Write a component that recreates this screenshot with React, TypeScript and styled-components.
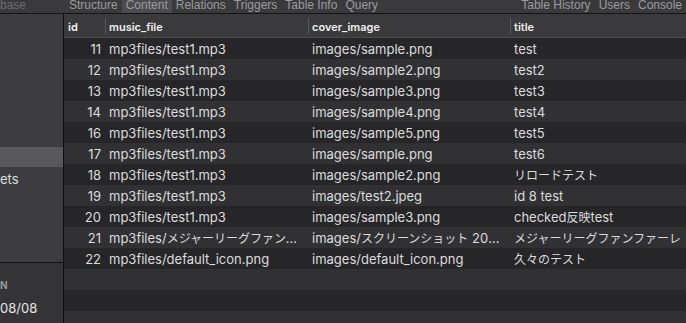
import React from "react"
import styled, { createGlobalStyle } from "styled-components"

const GlobalStyle = createGlobalStyle`
  html, body {
    margin: 0;
    padding: 0;
    background: #2a2a2c;
    overflow: hidden;
  }
  body {
    font-family: Inter, "Liberation Sans", "Noto Sans CJK JP", sans-serif;
    -webkit-font-smoothing: antialiased;
  }
`

type Row = { id: number; music: string; cover: string; title: string }

const rows: Row[] = [
  { id: 11, music: "mp3files/test1.mp3", cover: "images/sample.png", title: "test" },
  { id: 12, music: "mp3files/test1.mp3", cover: "images/sample2.png", title: "test2" },
  { id: 13, music: "mp3files/test1.mp3", cover: "images/sample3.png", title: "test3" },
  { id: 14, music: "mp3files/test1.mp3", cover: "images/sample4.png", title: "test4" },
  { id: 16, music: "mp3files/test1.mp3", cover: "images/sample5.png", title: "test5" },
  { id: 17, music: "mp3files/test1.mp3", cover: "images/sample.png", title: "test6" },
  { id: 18, music: "mp3files/test1.mp3", cover: "images/sample2.png", title: "リロードテスト" },
  { id: 19, music: "mp3files/test1.mp3", cover: "images/test2.jpeg", title: "id 8 test" },
  { id: 20, music: "mp3files/test1.mp3", cover: "images/sample3.png", title: "checked反映test" },
  {
    id: 21,
    music: "mp3files/メジャーリーグファンファーレ.mp3",
    cover: "images/スクリーンショット 2023-08-08.png",
    title: "メジャーリーグファンファーレ",
  },
  { id: 22, music: "mp3files/default_icon.png", cover: "images/default_icon.png", title: "久々のテスト" },
]

const leftTabs = ["Structure", "Content", "Relations", "Triggers", "Table Info", "Query"]
const rightTabs = ["Table History", "Users", "Console"]

const Window = styled.div`
  display: flex;
  flex-direction: column;
  width: 686px;
  height: 323px;
  overflow: hidden;
  background: #2a2a2c;
`

const Toolbar = styled.div`
  display: flex;
  align-items: flex-end;
  height: 13px;
  flex-shrink: 0;
  overflow: hidden;
  background: #3a3a3c;
  border-bottom: 1px solid #141414;
`

const DbLabel = styled.div`
  width: 65px;
  flex-shrink: 0;
  font-family: "Liberation Sans", sans-serif;
  font-size: 12px;
  line-height: 16px;
  height: 16px;
  color: #6c6c6e;
  white-space: nowrap;
`

const Tab = styled.div<{ $active?: boolean }>`
  font-family: "Liberation Sans", sans-serif;
  font-size: 12px;
  line-height: 16px;
  height: 16px;
  padding: 0 4px;
  color: #9b9b9d;
  background: ${(p) => (p.$active ? "#4c4c4e" : "transparent")};
  white-space: nowrap;
`

const Spacer = styled.div`
  flex: 1;
`

const Main = styled.div`
  display: flex;
  flex: 1;
  min-height: 0;
`

const Sidebar = styled.div`
  display: flex;
  flex-direction: column;
  width: 63px;
  flex-shrink: 0;
  border-right: 1px solid #0e0e0e;
  background: #3d3d3f;
`

const SideList = styled.div`
  display: flex;
  flex-direction: column;
  flex: 1;
  padding-top: 133px;
`

const SideItem = styled.div<{ $selected?: boolean }>`
  height: 20px;
  line-height: 20px;
  font-size: 13px;
  color: #dedede;
  background: ${(p) => (p.$selected ? "#59595b" : "transparent")};
  white-space: nowrap;
  overflow: hidden;
  margin-bottom: 2px;
`

const SideFooter = styled.div`
  display: flex;
  flex-direction: column;
  height: 61px;
  flex-shrink: 0;
  background: #353537;
  border-top: 1px solid #111;
  padding-top: 15px;
  box-sizing: border-box;
`

const FooterLabel = styled.div`
  font-size: 10px;
  font-weight: 700;
  color: #9a9a9c;
  line-height: 14px;
  white-space: nowrap;
`

const FooterValue = styled.div`
  font-size: 13px;
  color: #e6e6e6;
  line-height: 18px;
  margin-top: 7px;
  white-space: nowrap;
`

const TableArea = styled.div`
  flex: 1;
  min-width: 0;
  overflow: hidden;
`

const Grid = styled.div`
  display: grid;
  grid-template-columns: 41px 203px 202px 260px;
`

const HeadCell = styled.div<{ $first?: boolean }>`
  display: flex;
  align-items: center;
  height: 24px;
  padding: 2px 4px 0;
  box-sizing: border-box;
  background: #3a3a3c;
  border-bottom: 1px solid #4a4a4c;
  font-size: 11px;
  font-weight: 600;
  color: #f0f0f0;
  white-space: nowrap;
  position: relative;

  &::before {
    content: "";
    display: ${(p) => (p.$first ? "none" : "block")};
    position: absolute;
    left: 0;
    top: 4px;
    bottom: 3px;
    width: 1px;
    background: #5a5a5c;
  }
`

const Cell = styled.div<{ $odd: boolean; $num?: boolean }>`
  height: 21px;
  box-sizing: border-box;
  padding: 1px 4px 0;
  line-height: 20px;
  font-size: 13px;
  color: #dcdcde;
  background: ${(p) => (p.$odd ? "#313133" : "#262628")};
  text-align: ${(p) => (p.$num ? "right" : "left")};
  white-space: nowrap;
  overflow: hidden;
  text-overflow: ellipsis;
`

const LastCell = styled(Cell)`
  text-overflow: clip;
`

const Cjk = styled.span`
  font-family: "Noto Sans CJK JP", sans-serif;
  font-size: 12px;
`

// the macOS Japanese glyphs sit a little narrower than Noto at 13px
const withCjk = (text: string) =>
  text.split(/([\u3000-\u30ff\u4e00-\u9fff]+)/).map((part, i) =>
    i % 2 === 1 ? <Cjk key={i}>{part}</Cjk> : part,
  )

const App: React.FC = () => {
  const empty = [0, 1, 2]
  return (
    <>
      <GlobalStyle />
      <Window>
        <Toolbar>
          <DbLabel>base</DbLabel>
          {leftTabs.map((t) => (
            <Tab key={t} $active={t === "Content"}>
              {t}
            </Tab>
          ))}
          <Spacer />
          {rightTabs.map((t) => (
            <Tab key={t}>{t}</Tab>
          ))}
        </Toolbar>
        <Main>
          <Sidebar>
            <SideList>
              <SideItem $selected> </SideItem>
              <SideItem>ets</SideItem>
            </SideList>
            <SideFooter>
              <FooterLabel>N</FooterLabel>
              <FooterValue>08/08</FooterValue>
            </SideFooter>
          </Sidebar>
          <TableArea>
            <Grid>
              <HeadCell $first>id</HeadCell>
              <HeadCell>music_file</HeadCell>
              <HeadCell>cover_image</HeadCell>
              <HeadCell>title</HeadCell>
              {rows.map((r, i) => (
                <React.Fragment key={r.id}>
                  <Cell $odd={i % 2 === 1} $num>
                    {r.id}
                  </Cell>
                  <Cell $odd={i % 2 === 1}>{withCjk(r.music)}</Cell>
                  <Cell $odd={i % 2 === 1}>{withCjk(r.cover)}</Cell>
                  <LastCell $odd={i % 2 === 1}>{withCjk(r.title)}</LastCell>
                </React.Fragment>
              ))}
              {empty.map((e) => {
                const odd = (rows.length + e) % 2 === 1
                return (
                  <React.Fragment key={`e${e}`}>
                    <Cell $odd={odd} />
                    <Cell $odd={odd} />
                    <Cell $odd={odd} />
                    <Cell $odd={odd} />
                  </React.Fragment>
                )
              })}
            </Grid>
          </TableArea>
        </Main>
      </Window>
    </>
  )
}

export default App
